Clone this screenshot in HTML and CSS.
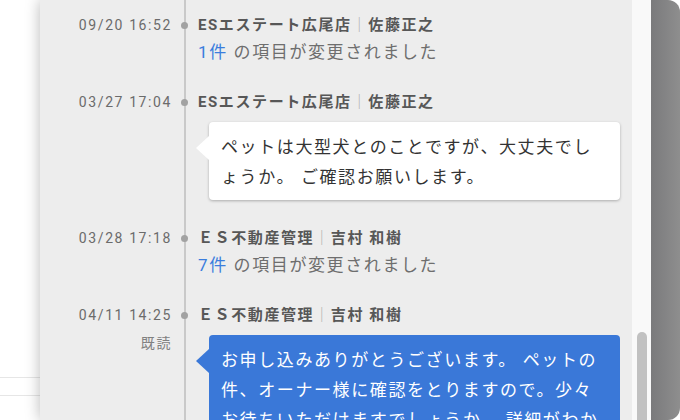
FILE: index.html
```html
<!DOCTYPE html>
<html lang="ja">
<head>
    <meta charset="UTF-8">
    <meta name="viewport" content="width=device-width, initial-scale=1.0">
    <title>Timeline</title>
    <link rel="stylesheet" href="styles.css">
</head>
<body>
    <div class="side">
        <div class="side-row"></div>
    </div>

    <div class="panel">
        <div class="timeline">
            <div class="entry">
                <div class="meta"><span class="time">09/20 16:52</span></div>
                <span class="dot"></span>
                <div class="body">
                    <div class="author">ESエステート広尾店<span class="sep">｜</span>佐藤正之</div>
                    <div class="change"><span class="count">1件</span> の項目が変更されました</div>
                </div>
            </div>

            <div class="entry">
                <div class="meta"><span class="time">03/27 17:04</span></div>
                <span class="dot"></span>
                <div class="body">
                    <div class="author">ESエステート広尾店<span class="sep">｜</span>佐藤正之</div>
                    <div class="bubble">ペットは大型犬とのことですが、大丈夫でしょうか。 ご確認お願いします。</div>
                </div>
            </div>

            <div class="entry">
                <div class="meta"><span class="time">03/28 17:18</span></div>
                <span class="dot"></span>
                <div class="body">
                    <div class="author">ＥＳ不動産管理<span class="sep">｜</span>吉村 和樹</div>
                    <div class="change"><span class="count">7件</span> の項目が変更されました</div>
                </div>
            </div>

            <div class="entry">
                <div class="meta">
                    <span class="time">04/11 14:25</span>
                    <span class="read">既読</span>
                </div>
                <span class="dot"></span>
                <div class="body">
                    <div class="author">ＥＳ不動産管理<span class="sep">｜</span>吉村 和樹</div>
                    <div class="bubble mine">お申し込みありがとうございます。 ペットの件、オーナー様に確認をとりますので。少々お待ちいただけますでしょうか。 詳細がわかり次第ご連絡いたします。</div>
                </div>
            </div>
        </div>
    </div>

    <div class="track">
        <div class="thumb"></div>
    </div>

    <div class="backdrop"></div>
</body>
</html>
```

FILE: styles.css
```css
body {
    margin: 0;
    width: 680px;
    height: 420px;
    overflow: hidden;
    display: flex;
    background-color: #fff;
    font-family: Roboto, "Noto Sans CJK JP", sans-serif;
    letter-spacing: 0.1em;
}
.side {
    width: 40px;
    flex-shrink: 0;
    padding-top: 377px;
    box-sizing: border-box;
}
.side-row {
    height: 17px;
    border-top: 1px solid #e6e6e6;
    border-bottom: 1px solid #e6e6e6;
}
.panel {
    width: 592px;
    flex-shrink: 0;
    background-color: #ededed;
    box-shadow: 0 0 14px rgba(0, 0, 0, 0.28);
    overflow: hidden;
}
.timeline {
    padding-top: 14px;
    background: linear-gradient(#c9c9c9, #c9c9c9) no-repeat 144px 0 / 2px 100%;
    min-height: 100%;
}
.entry {
    display: grid;
    grid-template-columns: 132px 26px 1fr;
    align-items: start;
    padding-bottom: 23px;
}
.meta {
    display: flex;
    flex-direction: column;
    align-items: flex-end;
    color: #6b6b6b;
}
.time {
    font-size: 14px;
    line-height: 22px;
}
.read {
    font-size: 14px;
    line-height: 16px;
    margin-top: 9px;
    color: #808080;
}
.dot {
    width: 7px;
    height: 7px;
    margin: 8px 0 0 9px;
    border-radius: 50%;
    background-color: #a2a2a2;
}
.author {
    font-size: 15px;
    line-height: 22px;
    font-weight: bold;
    color: #575757;
}
.sep {
    font-weight: normal;
    color: #b0b0b0;
}
.change {
    font-size: 17px;
    line-height: 32px;
    color: #6e6e6e;
}
.count {
    color: #3b7ddd;
}
.bubble {
    position: relative;
    width: 411px;
    box-sizing: border-box;
    margin: 9px 0 4px 11px;
    padding: 10px 14px 8px 12px;
    font-size: 17px;
    line-height: 30px;
    line-break: normal;
    color: #333;
    background-color: #fff;
    border-radius: 4px;
    box-shadow: 0 1px 3px rgba(0, 0, 0, 0.28);
}
.bubble::before {
    content: "";
    position: absolute;
    left: -13px;
    top: 14px;
    border-top: 12px solid transparent;
    border-bottom: 12px solid transparent;
    border-right: 13px solid #fff;
}
.bubble.mine {
    margin-top: 9px;
    color: #fff;
    background-color: #3a78d8;
    box-shadow: none;
}
.bubble.mine::before {
    border-right-color: #3a78d8;
}
.track {
    width: 19px;
    flex-shrink: 0;
    background-color: #f9f9f9;
    padding: 332px 0 0 5px;
    box-sizing: border-box;
}
.thumb {
    width: 10px;
    height: 120px;
    border-radius: 5px;
    background-color: #c1c1c1;
}
.backdrop {
    flex: 1;
    background: linear-gradient(to right, #7a7a7c, #8e8e8e);
    border-radius: 0 12px 12px 0;
}
```
